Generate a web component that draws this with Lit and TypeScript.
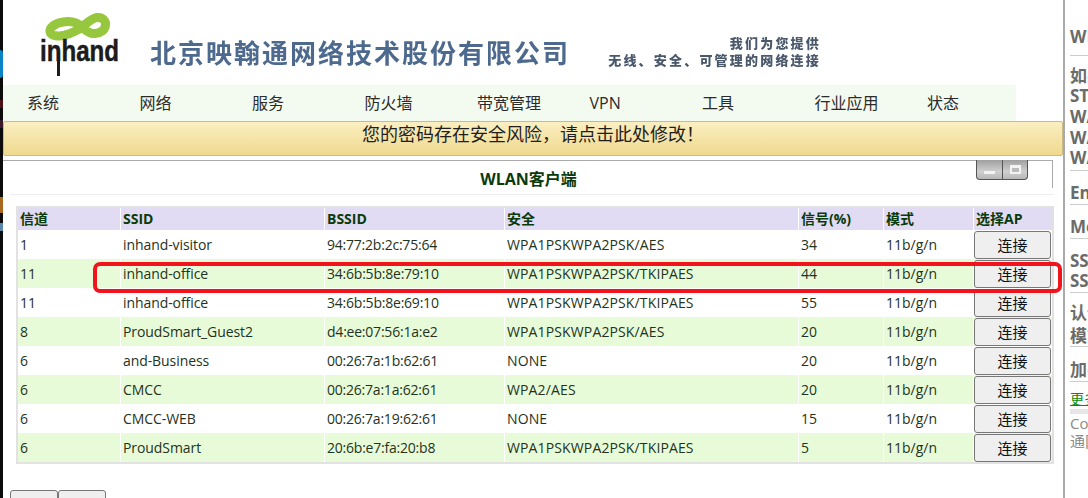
import { LitElement, html, css } from 'lit';
import { customElement } from 'lit/decorators.js';

const NAV = ['系统', '网络', '服务', '防火墙', '带宽管理', 'VPN', '工具', '行业应用', '状态'];
const COLUMNS = ['信道', 'SSID', 'BSSID', '安全', '信号(%)', '模式', '选择AP'];
const ROWS = [
  ['1', 'inhand-visitor', '94:77:2b:2c:75:64', 'WPA1PSKWPA2PSK/AES', '34'],
  ['11', 'inhand-office', '34:6b:5b:8e:79:10', 'WPA1PSKWPA2PSK/TKIPAES', '44'],
  ['11', 'inhand-office', '34:6b:5b:8e:69:10', 'WPA1PSKWPA2PSK/TKIPAES', '55'],
  ['8', 'ProudSmart_Guest2', 'd4:ee:07:56:1a:e2', 'WPA1PSKWPA2PSK/AES', '20'],
  ['6', 'and-Business', '00:26:7a:1b:62:61', 'NONE', '20'],
  ['6', 'CMCC', '00:26:7a:1a:62:61', 'WPA2/AES', '20'],
  ['6', 'CMCC-WEB', '00:26:7a:19:62:61', 'NONE', '15'],
  ['6', 'ProudSmart', '20:6b:e7:fa:20:b8', 'WPA1PSKWPA2PSK/TKIPAES', '5'],
];

@customElement('app-root')
export class AppRoot extends LitElement {
  static styles = css`
    :host {
      display: block;
      height: 498px;
      overflow: hidden;
      position: relative;
      background: #fff;
      font-family: 'Open Sans', 'Noto Sans CJK SC', sans-serif;
      color: #222;
    }
    .page { display: flex; height: 498px; }
    .strip { width: 3px; flex: none; background: #0c0c0c; display: flex; flex-direction: column; }
    .strip i { display: block; }
    .strip .blue { height: 28px; margin-top: 50px; background: #0a84c4; border-radius: 0 3px 3px 0; }
    .strip .red { height: 8px; margin-top: 22px; background: #4a1212; }
    .strip .red2 { height: 8px; margin-top: 12px; background: #3a1a2a; }
    .strip .orange { height: 16px; margin-top: 69px; background: #a8681f; }
    .strip .sky { height: 8px; margin-top: 10px; background: #5a86ac; }
    .main { width: 1060px; flex: none; position: relative; }

    .head { height: 85px; display: flex; }
    .logo { width: 147px; flex: none; }
    .title {
      margin-top: 32px;
      font-size: 26px;
      line-height: 40px;
      letter-spacing: 2px;
      font-weight: 700;
      color: #4d6a8e;
      white-space: nowrap;
      filter: blur(0.35px);
      font-family: 'Noto Sans CJK SC', sans-serif;
    }
    .tag {
      margin: 34px 0 0 38px;
      width: 213px;
      font-size: 13px;
      line-height: 17px;
      font-weight: 900;
      letter-spacing: 2.2px;
      color: #4a586c;
      text-align: right;
      white-space: nowrap;
      filter: blur(0.5px);
      font-family: 'Noto Sans CJK SC', sans-serif;
    }

    .nav {
      width: 1013px;
      height: 36px;
      background: #f3fbf0;
      display: flex;
      padding-left: 24px;
      box-sizing: border-box;
      font-size: 16px;
      line-height: 36px;
      color: #2b2b2b;
    }
    .nav span { width: 112.5px; flex: none; }

    .banner {
      height: 35px;
      box-sizing: border-box;
      border: 1px solid #cdbb84;
      border-radius: 2px;
      background: linear-gradient(#fbefc2, #efd98e);
      text-align: center;
      font-size: 18px;
      line-height: 24px;
      color: #1e1e1e;
    }

    .panel { margin-top: 4px; position: relative; }
    .caption {
      width: 1050px;
      height: 34px;
      box-sizing: border-box;
      border-top: 1px solid #aaa;
      padding-left: 1px;
      text-align: center;
      font-size: 16px;
      font-weight: 700;
      line-height: 37px;
      color: #0a3a0a;
    }
    .caption-edge { position: absolute; top: 0; left: 1049px; width: 1px; height: 28px; background: #aaa; }
    .rule { margin-left: 7px; width: 1044px; height: 1px; background: #eee; }

    .winbtns { position: absolute; top: 0; left: 973px; display: flex; }
    .winbtn {
      width: 26px;
      height: 20px;
      box-sizing: border-box;
      border: 1px solid #555;
      border-top: none;
      background: linear-gradient(#9f9f9f, #cfcfcf 60%, #b8b8b8);
      display: flex;
      align-items: center;
      justify-content: center;
    }
    .winbtn:first-child { border-radius: 0 0 0 4px; border-right: none; }
    .winbtn:last-child { border-radius: 0 0 4px 0; }
    .winbtn i { display: block; box-sizing: border-box; }
    .winbtn .min { width: 11px; height: 3px; margin-top: 6px; background: #f3f3f3; }
    .winbtn .max { width: 11px; height: 9px; border: 2px solid #f3f3f3; border-top-width: 3px; background: #bbb; }

    table {
      margin: 11px 0 0 13px;
      width: 1038px;
      box-sizing: border-box;
      table-layout: fixed;
      border-collapse: separate;
      border-spacing: 0;
      border: 2px solid #e2e2e2;
      font-size: 14px;
      color: #1f3320;
    }
    th, td { padding: 0 0 0 2px; text-align: left; white-space: nowrap; border-right: 1px solid #fff; }
    th {
      height: 22px;
      box-sizing: border-box;
      padding-bottom: 2px;
      background: #e1dcf4;
      font-size: 14px;
      font-weight: 700;
      color: #0a3a0a;
    }
    td { height: 29px; box-sizing: border-box; }
    td:nth-child(2) { letter-spacing: -0.08px; }
    td:nth-child(3) { letter-spacing: -0.22px; }
    td:nth-child(4) { letter-spacing: 0.13px; }
    tr:nth-child(even) td { background: #e8fbd9; }
    td:last-child { padding: 0; border-right: none; }
    th:last-child { border-right: none; }

    button {
      display: block;
      box-sizing: border-box;
      width: 77px;
      height: 28px;
      padding: 0;
      border: 1px solid #777;
      border-radius: 3px;
      background: #efefef;
      font: 15px/26px 'Open Sans', 'Noto Sans CJK SC', sans-serif;
      color: #111;
    }
    .foot { display: flex; margin: 26px 0 0 7px; }
    .foot button { width: 48px; height: 30px; border-radius: 3px 3px 0 0; padding-top: 2px; }

    .mark {
      position: absolute;
      left: 90px;
      top: 262px;
      width: 969px;
      height: 31px;
      box-sizing: border-box;
      border: 4px solid #f2141c;
      border-radius: 7px;
      pointer-events: none;
    }

    .divider { width: 2px; flex: none; background: #aaa; }
    .side {
      flex: 1;
      min-width: 0;
      overflow: hidden;
      padding: 27px 0 0 5px;
      font-size: 17px;
      font-weight: 700;
      color: #6b6b6b;
      white-space: nowrap;
      font-family: 'Open Sans', 'Noto Sans CJK SC', sans-serif;
    }
    .side div { height: 20.7px; line-height: 20.7px; }
    .side hr { border: 0; height: 1px; background: #ccc; margin: 0; }
    .side .more { color: #0a8a0a; font-weight: 400; font-size: 14px; text-decoration: underline; height: 15px; line-height: 15px; }
    .side .bar { height: 5px; background: #e6e6e6; margin: 3px 0 0; }
    .side .plain { font-weight: 400; font-size: 15px; color: #8a8a8a; height: 18px; line-height: 18px; }
  `;

  private renderLogo() {
    return html`<svg width="147" height="85" viewBox="0 0 147 85">
      <path d="M79 27 C73 21 66 21 60 22 C52 23 46 28 47 32 C48 36 56 37 62 35 C69 33 74 31 79 27 C85 22 89 18 94 17.5 C100 17 103 21 102.5 25 C102 30 98 33 92 33.5 C87 34 83 31 79 27 Z"
        fill="none" stroke="#97c73e" stroke-width="9" stroke-linejoin="round" />
      <text x="37" y="61" textLength="79" lengthAdjust="spacingAndGlyphs"
        font-family="Liberation Sans, sans-serif" font-size="30" font-weight="700"
        fill="#1c1c1c" stroke="#1c1c1c" stroke-width="0.5">inhand</text>
      <rect x="54" y="52" width="3" height="24" fill="#1c1c1c" />
    </svg>`;
  }

  render() {
    return html`
      <div class="page">
        <div class="strip">
          <i class="blue"></i><i class="red"></i><i class="red2"></i><i class="orange"></i><i class="sky"></i>
        </div>
        <div class="main">
          <div class="head">
            <div class="logo">${this.renderLogo()}</div>
            <div class="title">北京映翰通网络技术股份有限公司</div>
            <div class="tag">我们为您提供<br />无线、安全、可管理的网络连接</div>
          </div>
          <div class="nav">${NAV.map(n => html`<span>${n}</span>`)}</div>
          <div class="banner">您的密码存在安全风险，请点击此处修改！</div>
          <div class="panel">
            <div class="caption">WLAN客户端</div>
            <div class="caption-edge"></div>
            <div class="winbtns">
              <div class="winbtn"><i class="min"></i></div>
              <div class="winbtn"><i class="max"></i></div>
            </div>
            <div class="rule"></div>
            <table>
              <colgroup>
                <col style="width:103px" /><col style="width:204px" /><col style="width:180px" />
                <col style="width:294px" /><col style="width:85px" /><col style="width:90px" /><col />
              </colgroup>
              <thead><tr>${COLUMNS.map(c => html`<th>${c}</th>`)}</tr></thead>
              <tbody>
                ${ROWS.map(r => html`<tr>
                  ${r.map(v => html`<td>${v}</td>`)}
                  <td>11b/g/n</td>
                  <td><button>连接</button></td>
                </tr>`)}
              </tbody>
            </table>
            <div class="foot"><button>刷新</button><button>返回</button></div>
          </div>
          <div class="mark"></div>
        </div>
        <div class="divider"></div>
        <div class="side">
          <div>WLAN</div><hr style="margin-top:7px" />
          <div style="margin-top:10px">如果</div><div>STA</div><div>WAN</div><div>WAN</div><div>WAN</div>
          <hr style="margin-top:1px" />
          <div style="margin-top:12px">Enable</div><hr />
          <div style="margin-top:12px">Mode</div><hr />
          <div style="margin-top:12px">SSID</div><div>SSID</div><hr />
          <div style="margin-top:10px">认证</div><div style="margin-top:2px">模式</div><hr />
          <div style="margin-top:13px">加密</div><hr />
          <div class="more" style="margin-top:9px">更多</div>
          <div class="bar"></div>
          <div class="plain">Copyright</div>
          <div class="plain">通网络</div>
        </div>
      </div>
    `;
  }
}
